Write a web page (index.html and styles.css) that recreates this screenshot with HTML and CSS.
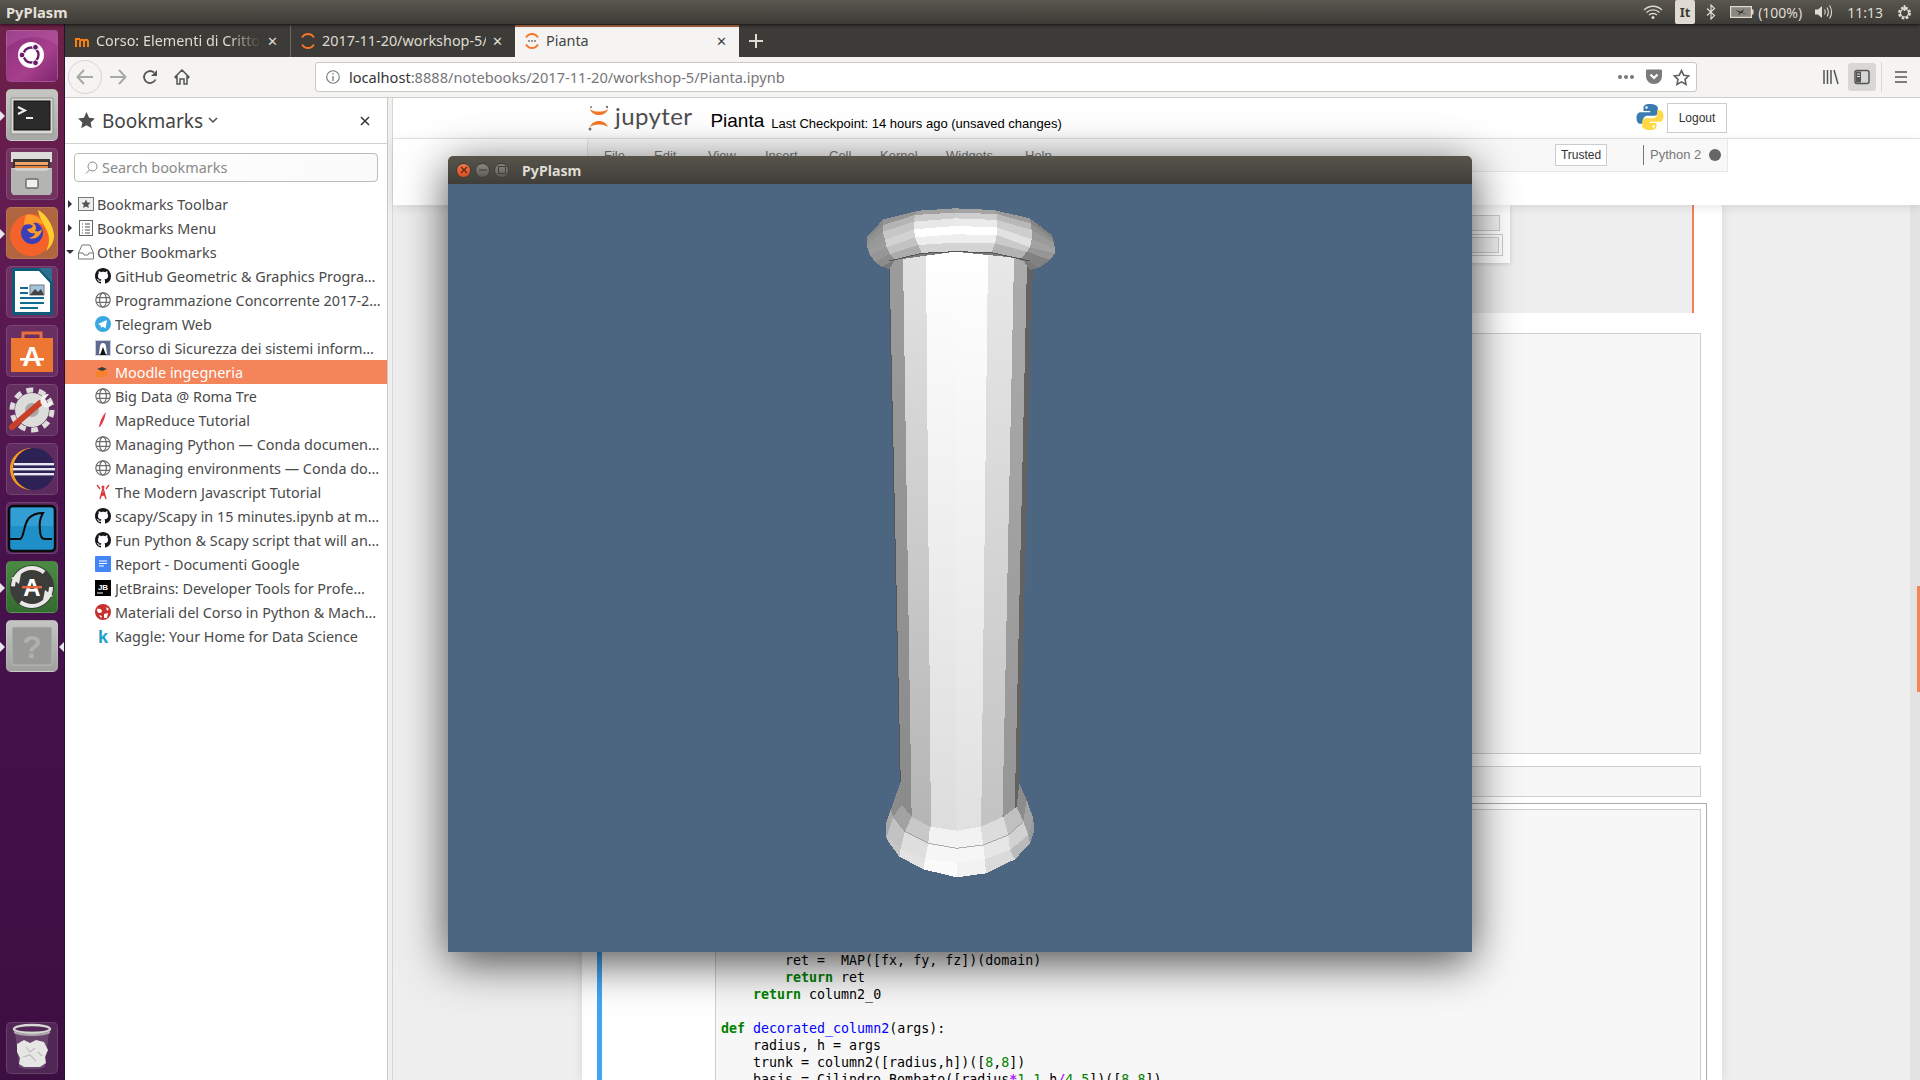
FILE: index.html
```html
<!DOCTYPE html>
<html lang="en">
<head>
  <meta charset="UTF-8" />
  <title>PyPlasm</title>
  <link rel="stylesheet" href="styles.css">
</head>
<body>
  <svg class="defs" width="0" height="0">
    <symbol id="gh" viewBox="0 0 16 16"><path fill="#16171a" d="M8 0C3.58 0 0 3.58 0 8c0 3.54 2.29 6.53 5.47 7.59.4.07.55-.17.55-.38 0-.19-.01-.82-.01-1.49-2.01.37-2.53-.49-2.69-.94-.09-.23-.48-.94-.82-1.13-.28-.15-.68-.52-.01-.53.63-.01 1.08.58 1.23.82.72 1.21 1.87.87 2.33.66.07-.52.28-.87.51-1.07-1.78-.2-3.64-.89-3.64-3.95 0-.87.31-1.59.82-2.15-.08-.2-.36-1.02.08-2.12 0 0 .67-.21 2.2.82.64-.18 1.32-.27 2-.27.68 0 1.36.09 2 .27 1.53-1.04 2.2-.82 2.2-.82.44 1.1.16 1.92.08 2.12.51.56.82 1.27.82 2.15 0 3.07-1.87 3.75-3.65 3.95.29.25.54.73.54 1.48 0 1.07-.01 1.93-.01 2.2 0 .21.15.46.55.38A8.013 8.013 0 0016 8c0-4.42-3.58-8-8-8z"/></symbol>
    <symbol id="globe" viewBox="0 0 16 16"><g fill="none" stroke="#6d6d6d" stroke-width="1.2"><circle cx="8" cy="8" r="7.2"/><ellipse cx="8" cy="8" rx="3.4" ry="7.2"/><path d="M1 5.6h14M1 10.4h14"/></g></symbol>
    <symbol id="jup" viewBox="0 0 24 24"><path fill="#f37726" d="M12 5.500c-4 0-7.400-1-9-2.600C4 6.500 7.600 9 12 9s8-2.500 9-6.100C19.400 4.500 16 5.500 12 5.500zM12 18.500c4 0 7.400 1 9 2.600-1-3.600-4.600-6.100-9-6.100s-8 2.500-9 6.100c1.600-1.600 5-2.600 9-2.600z"/></symbol>
    <linearGradient id="s0" x1="0" y1="0" x2="0" y2="1"><stop offset="0" stop-color="#9c9c9c"/><stop offset="1" stop-color="#8a8a8a"/></linearGradient>
    <linearGradient id="s1" x1="0" y1="0" x2="0" y2="1"><stop offset="0" stop-color="#e2e2e2"/><stop offset="1" stop-color="#b4b4b4"/></linearGradient>
    <linearGradient id="s2" x1="0" y1="0" x2="0" y2="1"><stop offset="0" stop-color="#ffffff"/><stop offset="1" stop-color="#dcdcdc"/></linearGradient>
    <linearGradient id="s3" x1="0" y1="0" x2="0" y2="1"><stop offset="0" stop-color="#ffffff"/><stop offset="1" stop-color="#e0e0e0"/></linearGradient>
    <linearGradient id="s4" x1="0" y1="0" x2="0" y2="1"><stop offset="0" stop-color="#e8e8e8"/><stop offset="1" stop-color="#c2c2c2"/></linearGradient>
    <linearGradient id="s5" x1="0" y1="0" x2="0" y2="1"><stop offset="0" stop-color="#ababab"/><stop offset="1" stop-color="#959595"/></linearGradient>
  </svg>

  <header class="panel">
    <span class="panel-title">PyPlasm</span>
    <div class="indicators">
      <svg class="ind-wifi" width="20" height="16" viewBox="0 0 20 16"><g fill="none" stroke="#dfdbd2" stroke-width="1.3"><path d="M1 6c5-5 13-5 18 0"/><path d="M3.500 8.500c3.500-3.500 9.500-3.500 13 0"/><path d="M6 11c2-2 6-2 8 0"/></g><circle cx="10" cy="13.500" r="1.500" fill="#dfdbd2"/></svg>
      <span class="ind-lang">It</span>
      <svg class="ind-bt" width="10" height="16" viewBox="0 0 10 16"><path fill="none" stroke="#dfdbd2" stroke-width="1.200" d="M1 4.500l7.500 7-3.500 3.500V1l3.500 3.500L1 11.500"/></svg>
      <svg class="ind-batt" width="24" height="14" viewBox="0 0 24 14"><rect x=".6" y="1.600" width="20.800" height="10.800" fill="#8a8881" stroke="#dfdbd2" stroke-width="1.200"/><rect x="21.500" y="4.500" width="2" height="5" fill="#dfdbd2"/><path fill="#33322e" d="M5 5l6 1.500L14 4l-1.500 3.500L17 9l-6-1-3 2.500L9.500 7.500z"/></svg>
      <span class="ind-pct">(100%)</span>
      <svg class="ind-vol" width="20" height="16" viewBox="0 0 20 16"><path fill="#dfdbd2" d="M1 5.500h3L8 2v12l-4-3.500H1z"/><g fill="none" stroke="#dfdbd2" stroke-width="1.100"><path d="M10.500 5.500c1 1.500 1 3.500 0 5"/><path d="M13 3.500c1.800 2.500 1.800 6.500 0 9"/><path d="M15.500 1.500c2.700 3.500 2.700 9.500 0 13"/></g></svg>
      <span class="ind-time">11:13</span>
      <svg class="ind-gear" width="17" height="17" viewBox="0 0 17 17"><circle cx="8.500" cy="9" r="5.300" fill="none" stroke="#dfdbd2" stroke-width="2.400" stroke-dasharray="2.600 1.560"/><circle cx="8.500" cy="9" r="4" fill="none" stroke="#dfdbd2" stroke-width="1.200"/><path d="M8.500 1v6" stroke="#dfdbd2" stroke-width="1.600"/></svg>
    </div>
  </header>

  <div class="desktop">
    <nav class="launcher">
      <div class="tile tile-dash"><svg width="52" height="52" viewBox="0 0 52 52"><path fill="#c468a8" opacity=".35" d="M0 18C16 4 38 4 52 16V0H0z"/><circle cx="25" cy="25" r="13" fill="#fff"/><circle cx="25" cy="25" r="7.500" fill="none" stroke="#6a1b6a" stroke-width="2.400"/><g fill="#6a1b6a" stroke="#fff"><circle cx="16" cy="25" r="2.900"/><circle cx="29.500" cy="17.200" r="2.900"/><circle cx="29.500" cy="32.800" r="2.900"/></g></svg></div>
      <div class="tile tile-term running"><svg width="52" height="52" viewBox="0 0 52 52"><rect x="5" y="9" width="42" height="36" rx="1" fill="#d9d9d6" stroke="#8c8c8a"/><rect x="8" y="12" width="36" height="29" fill="#2b2b2b" stroke="#111"/><path d="M12 18l7 3.500-7 3.500" fill="none" stroke="#eee" stroke-width="2"/><path d="M20 29h7" stroke="#eee" stroke-width="2"/></svg></div>
      <div class="tile tile-glass"><svg width="52" height="52" viewBox="0 0 52 52"><rect x="5" y="4" width="41" height="10" fill="#dcdcda"/><rect x="7" y="11" width="37" height="15" fill="#3a3733"/><rect x="9" y="14" width="33" height="3" fill="#f0a568"/><rect x="9" y="18" width="33" height="3" fill="#e8843c"/><path d="M5 20h41v24l-2 3H7l-2-3z" fill="#b4b4b2"/><path d="M5 20l6 3h29l6-3" fill="#cfcfcd"/><rect x="20" y="31" width="12" height="9" rx="1" fill="#f0f0f0" stroke="#6b6b6b" stroke-width="1.400"/></svg></div>
      <div class="tile tile-fox running"><svg width="52" height="52" viewBox="0 0 52 52"><circle cx="25" cy="28" r="21" fill="#f4622a"/><path d="M32 3c9 5 15 15 16 25 0 7-3 12-8 16 4-8 4-15 0-22-3-6-7-12-8-19z" fill="#ffcd2e"/><circle cx="26" cy="26" r="11" fill="#3a3fb8"/><path d="M20 8c9-2 16 4 17 10-4-3-8-3-10-2 3 2 4 5 2 8 3 1 5 0 7-2-1 8-8 11-13 9 4-1 6-3 6-5-4 1-7-1-8-4 3 0 5-1 6-3-2-2-6-2-9-1 0-4 1-7 2-10z" fill="#ff9a2b"/></svg></div>
      <div class="tile tile-glass"><svg width="52" height="52" viewBox="0 0 52 52"><path d="M6 2h29l12 13v34H6z" fill="#0f5a78"/><path d="M9 5h24l11 12v29H9z" fill="#fff"/><path d="M33 2h13v14z" fill="#2c6f8e"/><g fill="#136a93"><rect x="14" y="21" width="8" height="2"/><rect x="14" y="26" width="8" height="2"/><rect x="14" y="31" width="24" height="2"/><rect x="14" y="36" width="24" height="2"/><rect x="14" y="41" width="18" height="2"/></g><rect x="24" y="19" width="14" height="10" fill="#9fc4dc" stroke="#777"/><path d="M24 29l5-6 3 3 3-3 3 6z" fill="#444"/></svg></div>
      <div class="tile tile-glass"><svg width="52" height="52" viewBox="0 0 52 52"><path d="M17 14V8h18v6" fill="none" stroke="#e8703a" stroke-width="3"/><rect x="5" y="13" width="42" height="34" fill="#ee7633"/><text x="26" y="41" class="tile-letter" font-size="27">A</text><rect x="14" y="33" width="24" height="2.600" fill="#fff"/></svg></div>
      <div class="tile tile-glass"><svg width="52" height="52" viewBox="0 0 52 52"><circle cx="26" cy="26" r="17" fill="#dcdcda"/><circle cx="26" cy="26" r="20" fill="none" stroke="#dcdcda" stroke-width="5" stroke-dasharray="7 5.560"/><circle cx="26" cy="26" r="7" fill="#a8a8a6"/><path d="M6 43l28-24" stroke="#c8402a" stroke-width="6" stroke-linecap="round"/><path d="M36 21c-4-5 0-12 7-11l-4 5 2 4 5-2c1 6-6 9-10 4z" fill="#f0f0ee"/></svg></div>
      <div class="tile tile-glass"><svg width="52" height="52" viewBox="0 0 52 52"><path d="M26 5C13 5 4 15 4 26s9 21 22 21c-10-2-17-10-17-21S16 7 26 5z" fill="#f59c1f"/><circle cx="28" cy="26" r="21" fill="#2c2255"/><g fill="#e8e6f2"><rect x="8" y="20" width="40" height="2.400"/><rect x="7" y="25" width="42" height="2.400"/><rect x="8" y="30" width="40" height="2.400"/></g></svg></div>
      <div class="tile tile-glass"><svg width="52" height="52" viewBox="0 0 52 52"><rect x="3" y="4" width="46" height="45" rx="4" fill="#1f8fc8" stroke="#0a0a0a" stroke-width="2.400"/><rect x="5" y="6" width="42" height="18" fill="#46aee0" opacity=".5"/><path d="M4 37h10c4 0 3-14 9-21 4-4 10-5 14-5-3 5-4 11-3 17 0 5 1 9 5 9h7" fill="none" stroke="#0a0a0a" stroke-width="2"/></svg></div>
      <div class="tile tile-upd running"><svg width="52" height="52" viewBox="0 0 52 52"><circle cx="26" cy="26" r="22" fill="#3c3c3a"/><circle cx="26" cy="26" r="19" fill="none" stroke="#e8e8e6" stroke-width="4" stroke-dasharray="42 18"/><path d="M5 17l10-4-2 10zM47 35l-10 4 2-10z" fill="#e8e8e6"/><text x="26" y="35" class="tile-letter" font-size="24">A</text><rect x="16" y="25" width="20" height="2.400" fill="#e8643a"/></svg></div>
      <div class="tile tile-help running both"><svg width="52" height="52" viewBox="0 0 52 52"><rect x="6" y="7" width="40" height="38" rx="2" fill="#999997" stroke="#b8b8b6"/><text x="26" y="38" class="tile-qm" font-size="32">?</text></svg></div>
      <div class="tile tile-glass tile-trash"><svg width="52" height="52" viewBox="0 0 52 52"><path d="M9 9l4 36c5 3 21 3 26 0l4-36" fill="#ffffff" opacity=".14"/><ellipse cx="26" cy="7" rx="18" ry="4" fill="none" stroke="#d6d6d4" stroke-width="2.400"/><path d="M8 8c4 5 32 5 36 0v3c-4 4-32 4-36 0z" fill="#a8a8a6"/><path d="M11 22l7-4 6 3 6-3 8 2 4 8-3 7 1 6-6 4H18l-5-3 1-6-3-6z" fill="#e6e6e4"/><path d="M20 25l4 5 5-4M17 35l7-2 6 6M32 30l4 4" fill="none" stroke="#bdbdbb" stroke-width="1.200"/></svg></div>
    </nav>

    <div class="firefox">
      <div class="tabstrip">
        <div class="tab">
          <svg class="tab-icon" width="16" height="16" viewBox="0 0 16 16"><path d="M6 14V9c0-3 4-3 4 0v5M10 14V9c0-3 4-3 4 0v5M2 14V6h4" fill="none" stroke="#f98012" stroke-width="2"/></svg>
          <span class="tab-label tab-fade">Corso: Elementi di Crittografia</span>
          <span class="tab-close">✕</span>
        </div>
        <div class="tab tab-sep">
          <svg class="tab-icon" width="16" height="16" viewBox="0 0 16 16"><path d="M14 4.500C12.700 2.400 10.500 1 8 1S3.300 2.400 2 4.500M2 11.500C3.300 13.600 5.500 15 8 15s4.700-1.400 6-3.500" fill="none" stroke="#f37726" stroke-width="1.800"/></svg>
          <span class="tab-label">2017-11-20/workshop-5/</span>
          <span class="tab-close">✕</span>
        </div>
        <div class="tab tab-active">
          <svg class="tab-icon" width="16" height="16" viewBox="0 0 16 16"><path d="M14 4.500C12.700 2.400 10.500 1 8 1S3.300 2.400 2 4.500M2 11.500C3.300 13.600 5.500 15 8 15s4.700-1.400 6-3.500" fill="none" stroke="#f37726" stroke-width="1.800"/><circle cx="5" cy="8" r="1" fill="#777"/><circle cx="8" cy="8" r="1" fill="#777"/><circle cx="11" cy="8" r="1" fill="#777"/></svg>
          <span class="tab-label">Pianta</span>
          <span class="tab-close">✕</span>
        </div>
        <svg class="tab-new" width="14" height="14" viewBox="0 0 14 14"><path d="M7 0v14M0 7h14" stroke="#dfdbd2" stroke-width="2"/></svg>
      </div>

      <div class="navbar">
        <div class="nav-back"><svg width="18" height="16" viewBox="0 0 18 16"><path d="M8 1L1.500 8 8 15M2 8h15" fill="none" stroke="#a9a9a7" stroke-width="2"/></svg></div>
        <svg class="nav-fwd" width="18" height="16" viewBox="0 0 18 16"><path d="M10 1l6.500 7L10 15M16 8H1" fill="none" stroke="#a9a9a7" stroke-width="2"/></svg>
        <svg class="nav-reload" width="16" height="16" viewBox="0 0 16 16"><path d="M13.500 10.500A6 6 0 1 1 12 3.500" fill="none" stroke="#555" stroke-width="1.800"/><path d="M15 1v6H9z" fill="#555"/></svg>
        <svg class="nav-home" width="16" height="16" viewBox="0 0 16 16"><path d="M1 8l7-7 7 7-1 1-1-1v7h-3v-5H6v5H3V8L2 9z" fill="none" stroke="#555" stroke-width="1.500"/></svg>
        <div class="urlbar">
          <svg class="url-info" width="14" height="14" viewBox="0 0 14 14"><circle cx="7" cy="7" r="6.300" fill="none" stroke="#777" stroke-width="1.100"/><path d="M7 6v5M7 3v1.600" stroke="#777" stroke-width="1.300"/></svg>
          <span class="url-text"><b>localhost</b>:8888/notebooks/2017-11-20/workshop-5/Pianta.ipynb</span>
          <span class="url-more"><i></i><i></i><i></i></span>
          <svg class="url-pocket" width="16" height="16" viewBox="0 0 16 16"><path d="M0 2c0-1 .6-1.500 1.500-1.500h13C15.400.5 16 1 16 2v5c0 4.500-3.500 8-8 8s-8-3.500-8-8z" fill="#7b7b7b"/><path d="M4.500 5.500L8 9l3.500-3.500" fill="none" stroke="#fff" stroke-width="2.200"/></svg>
          <svg class="url-star" width="17" height="17" viewBox="0 0 17 17"><path d="M8.500 1.500l2.200 4.700 5 .6-3.700 3.500 1 5.100-4.500-2.500L4 15.400l1-5.100L1.300 6.800l5-.6z" fill="none" stroke="#5f5f5f" stroke-width="1.600"/></svg>
        </div>
        <svg class="nav-lib" width="16" height="16" viewBox="0 0 16 16"><path d="M1 1v14M4.500 1v14M8 1v14M11 1l4 14" stroke="#555" stroke-width="1.500" fill="none"/></svg>
        <div class="nav-side"><svg width="16" height="16" viewBox="0 0 16 16"><rect x="1" y="1.500" width="14" height="13" rx="2" fill="none" stroke="#555" stroke-width="1.500"/><rect x="2" y="2.500" width="5" height="11" fill="#555"/><path d="M3 5h3M3 7.500h3" stroke="#ddd"/></svg></div>
        <span class="nav-divider"></span>
        <svg class="nav-menu" width="14" height="14" viewBox="0 0 14 14"><path d="M1 2h12M1 7h12M1 12h12" stroke="#555" stroke-width="1.600"/></svg>
      </div>

      <div class="browser-body">
        <aside class="sidebar">
          <div class="side-head">
            <svg class="side-star" width="19" height="19" viewBox="0 0 17 17"><path d="M8.500 1l2.300 5 5.200.6-3.800 3.600 1 5.300-4.700-2.700-4.700 2.700 1-5.300L1 6.600 6.200 6z" fill="#4f4f4f"/></svg>
            <span class="side-title">Bookmarks</span>
            <svg class="side-chev" width="10" height="7" viewBox="0 0 10 7"><path d="M1 1l4 4 4-4" fill="none" stroke="#4f4f4f" stroke-width="1.500"/></svg>
            <svg class="side-close" width="10" height="10" viewBox="0 0 10 10"><path d="M1 1l8 8M9 1l-8 8" stroke="#333" stroke-width="1.500"/></svg>
          </div>
          <div class="side-search">
            <svg width="13" height="13" viewBox="0 0 13 13"><circle cx="7.500" cy="5.500" r="4.500" fill="none" stroke="#888"/><path d="M4.500 9L1 12.500" stroke="#888"/></svg>
            <span>Search bookmarks</span>
          </div>
          <ul class="bm-list">
            <li class="bm-row bm-folder"><span class="twisty"></span><svg width="16" height="16" viewBox="0 0 16 16"><rect x=".5" y="1.500" width="15" height="13" fill="#eee" stroke="#777"/><path d="M8 3.500l1.400 3 3.100.3-2.300 2.100.7 3.100L8 10.400 5.100 12l.7-3.100-2.300-2.100 3.100-.3z" fill="#555"/></svg><span class="bm-text">Bookmarks Toolbar</span></li>
            <li class="bm-row bm-folder"><span class="twisty"></span><svg width="16" height="16" viewBox="0 0 16 16"><rect x="1.500" y=".5" width="13" height="15" fill="#fff" stroke="#666"/><path d="M4 4h1M4 7h1M4 10h1M4 13h1M7 4h5M7 7h5M7 10h5M7 13h5" stroke="#555"/></svg><span class="bm-text">Bookmarks Menu</span></li>
            <li class="bm-row bm-folder"><span class="twisty twisty-open"></span><svg width="16" height="16" viewBox="0 0 16 16"><path d="M4 1h8l3.500 8v6H.5V9zM.5 9H5l1 2h4l1-2h4.500" fill="#fff" stroke="#777"/></svg><span class="bm-text">Other Bookmarks</span></li>
            <li class="bm-row"><svg class="fav"><use href="#gh"/></svg><span class="bm-text">GitHub Geometric &amp; Graphics Progra…</span></li>
            <li class="bm-row"><svg class="fav"><use href="#globe"/></svg><span class="bm-text">Programmazione Concorrente 2017-2…</span></li>
            <li class="bm-row"><svg class="fav" viewBox="0 0 16 16"><circle cx="8" cy="8" r="8" fill="#37a8e0"/><path d="M3 8l9-4-1.500 8.500-3-2-1.500 1.500-.3-2.500z" fill="#fff"/></svg><span class="bm-text">Telegram Web</span></li>
            <li class="bm-row"><svg class="fav" viewBox="0 0 16 16"><rect width="16" height="16" fill="#c9cfe0"/><rect x="1" y="1" width="14" height="14" fill="#5d6a92"/><path d="M8 3c-3 0-3 3-4 11h8C11 6 11 3 8 3z" fill="#fff"/><path d="M8 7L5 15h6z" fill="#111"/></svg><span class="bm-text">Corso di Sicurezza dei sistemi inform…</span></li>
            <li class="bm-row bm-active"><svg class="fav" viewBox="0 0 16 16"><path d="M2 5l5-2 5 2-5 2z" fill="#3a3a3a"/><path d="M5 13V9c0-2 3-2 3 0v4M8 13V9c0-2 3-2 3 0v4M2 13V8h3" fill="none" stroke="#f98012" stroke-width="1.600"/></svg><span class="bm-text">Moodle ingegneria</span></li>
            <li class="bm-row"><svg class="fav"><use href="#globe"/></svg><span class="bm-text">Big Data @ Roma Tre</span></li>
            <li class="bm-row"><svg class="fav" viewBox="0 0 16 16"><path d="M11 0C8 3 6 7 4 14l1 1c3-4 5-9 6-15z" fill="#e23a4b"/><path d="M3 14l1 2" stroke="#ddd"/></svg><span class="bm-text">MapReduce Tutorial</span></li>
            <li class="bm-row"><svg class="fav"><use href="#globe"/></svg><span class="bm-text">Managing Python — Conda documen…</span></li>
            <li class="bm-row"><svg class="fav"><use href="#globe"/></svg><span class="bm-text">Managing environments — Conda do…</span></li>
            <li class="bm-row"><svg class="fav" viewBox="0 0 16 16"><g fill="none" stroke="#d93a3a" stroke-width="1.300"><path d="M8 4l-3 11M8 4l3 11M6 9h4M5 13l5-4M11 13L6 9"/><path d="M2 1l3 4M14 1l-3 4"/></g><circle cx="8" cy="3" r="1.500" fill="#d93a3a"/></svg><span class="bm-text">The Modern Javascript Tutorial</span></li>
            <li class="bm-row"><svg class="fav"><use href="#gh"/></svg><span class="bm-text">scapy/Scapy in 15 minutes.ipynb at m…</span></li>
            <li class="bm-row"><svg class="fav"><use href="#gh"/></svg><span class="bm-text">Fun Python &amp; Scapy script that will an…</span></li>
            <li class="bm-row"><svg class="fav" viewBox="0 0 16 16"><rect width="16" height="16" rx="1" fill="#4285f4"/><path d="M4 5h8M4 7.500h8M4 10h5" stroke="#fff"/></svg><span class="bm-text">Report - Documenti Google</span></li>
            <li class="bm-row"><svg class="fav" viewBox="0 0 16 16"><rect width="16" height="16" fill="#000"/><text x="8" y="9.500" class="fav-jb">JB</text><rect x="2" y="12.500" width="6" height="1" fill="#fff"/></svg><span class="bm-text">JetBrains: Developer Tools for Profe…</span></li>
            <li class="bm-row"><svg class="fav" viewBox="0 0 16 16"><circle cx="8" cy="8" r="8" fill="#c8302e"/><path d="M2 5c3-1 5 0 5 3-3 2-5 1-5-3zM11 3l3 2-2 2zM9 10l4-1-1 5-3 0zM4 11l3 1-1 2z" fill="#fff"/></svg><span class="bm-text">Materiali del Corso in Python &amp; Mach…</span></li>
            <li class="bm-row"><svg class="fav" viewBox="0 0 16 16"><text x="8" y="14.500" class="fav-k">k</text></svg><span class="bm-text">Kaggle: Your Home for Data Science</span></li>
          </ul>
        </aside>
        <div class="splitter"></div>

        <main class="content">
          <div class="nb-header">
            <svg class="jup-logo" width="24" height="28" viewBox="0 0 24 28"><use href="#jup" y="2" width="24" height="24"/><circle cx="3" cy="25" r="1.500" fill="#777"/><circle cx="20" cy="3" r="1.200" fill="#777"/><circle cx="4" cy="3" r="1" fill="#777"/></svg>
            <span class="jup-name">jupyter</span>
            <span class="nb-name">Pianta</span>
            <span class="nb-check">Last Checkpoint: 14 hours ago (unsaved changes)</span>
            <svg class="py-logo" width="28" height="28" viewBox="0 0 28 28"><path fill="#3b7cb0" d="M13.800 1C8.500 1 7.500 3 7.500 5v3h6.700v1.200H4.500C2 9.200 0.500 11.500 0.500 15s1.500 5.800 4 5.800h2.300v-3.200c0-2.700 2.300-4.800 5-4.800h6.500c2 0 3.500-1.600 3.500-3.500V5c0-2.200-2.500-4-8.500-4z"/><path fill="#ffd845" d="M14.200 27c5.300 0 6.300-2 6.300-4v-3h-6.700v-1.200h9.700c2.500 0 4-2.300 4-5.800s-1.500-5.800-4-5.800h-2.300v3.200c0 2.700-2.300 4.800-5 4.800H9.700c-2 0-3.500 1.600-3.500 3.500V23c0 2.200 2.500 4 8 4z"/><circle cx="10.500" cy="4.500" r="1.200" fill="#fff"/><circle cx="17.500" cy="23.500" r="1.200" fill="#fff"/></svg>
            <span class="btn-logout">Logout</span>
          </div>
          <div class="nb-menuwrap">
            <div class="nb-menubar">
              <span class="menu-item menu-file">File</span>
              <span class="menu-item menu-edit">Edit</span>
              <span class="menu-item menu-view">View</span>
              <span class="menu-item menu-insert">Insert</span>
              <span class="menu-item menu-cell">Cell</span>
              <span class="menu-item menu-kernel">Kernel</span>
              <span class="menu-item menu-widgets">Widgets</span>
              <span class="menu-item">Help</span>
              <span class="btn-trusted">Trusted</span>
              <span class="kernel-name">Python 2</span>
              <span class="kernel-dot"></span>
            </div>
          </div>
          <div class="nb-site">
            <div class="gutter-left"></div>
            <div class="notebook">
              <div class="out-cell">
                <div class="widget">
                  <div class="widget-field"></div>
                  <div class="widget-frame"><div class="widget-field"></div></div>
                </div>
              </div>
              <div class="cell cell-tall"></div>
              <div class="cell cell-short"></div>
              <div class="cell-selected">
                <div class="prompt"></div>
<pre class="code">        ret =  MAP([fx, fy, fz])(domain)
        <span class="kw">return</span> ret
    <span class="kw">return</span> column2_0

<span class="kw">def</span> <span class="fn">decorated_column2</span>(args):
    radius, h = args
    trunk = column2([radius,h])([<span class="num">8</span>,<span class="num">8</span>])
    basis = Cilindro_Bombato([radius<span class="op">*</span><span class="num">1.1</span>,h<span class="op">/</span><span class="num">4.5</span>])([<span class="num">8</span>,<span class="num">8</span>])</pre>
              </div>
            </div>
            <div class="gutter-right"></div>
            <div class="scrollbar"><div class="scroll-thumb"></div></div>
          </div>
        </main>
      </div>
    </div>
  </div>

  <section class="window">
    <div class="win-title">
      <span class="win-btn win-close"><svg width="8" height="8" viewBox="0 0 8 8"><path d="M1 1l6 6M7 1L1 7" stroke="#5a2410" stroke-width="1.100"/></svg></span>
      <span class="win-btn"><svg width="8" height="8" viewBox="0 0 8 8"><path d="M0 4h8" stroke="#3c3b37" stroke-width="1.100"/></svg></span>
      <span class="win-btn"><svg width="8" height="8" viewBox="0 0 8 8"><rect x=".5" y=".5" width="7" height="7" fill="none" stroke="#3c3b37"/></svg></span>
      <span class="win-name">PyPlasm</span>
    </div>
    <div class="win-view">
      <svg class="model" width="1024" height="768" viewBox="448 184 1024 768">
        <!-- shaft -->
        <g shape-rendering="crispEdges">
          <polygon fill="url(#s0)" points="889,262 903,258 912,840 901,840"/>
          <polygon fill="url(#s1)" points="903,258 926,253 931,840 912,840"/>
          <polygon fill="url(#s2)" points="926,253 956,251 956,840 931,840"/>
          <polygon fill="url(#s3)" points="956,251 988,253 981,840 956,840"/>
          <polygon fill="url(#s4)" points="988,253 1014,258 1002,840 981,840"/>
          <polygon fill="url(#s5)" points="1014,258 1027,262 1014,840 1002,840"/>
          <polygon fill="#626262" points="1027,262 1033,262 1018,840 1014,840"/>
          <path d="M889 262L901 815" stroke="#555" stroke-width="1" fill="none"/>
        </g>
        <!-- capital, coordinates as zoomed 3x from 840,190 -->
        <g transform="translate(840 190) scale(.3333)" shape-rendering="crispEdges">
          <polygon fill="#7a7a7a" points="82,140 130,88 235,62 345,55 460,60 570,85 635,135 645,175 640,192 600,232 570,240 545,205 345,185 165,210 148,238 115,225 88,190 80,160"/>
          <polygon fill="#8a8a8a" points="82,140 130,88 130,105 80,150"/><polygon fill="#949494" points="130,88 235,62 225,75 130,105"/><polygon fill="#a0a0a0" points="235,62 345,55 345,68 225,75"/><polygon fill="#a4a4a4" points="345,55 460,60 470,72 345,68"/><polygon fill="#9a9a9a" points="460,60 570,85 572,100 470,72"/><polygon fill="#848484" points="570,85 635,135 640,148 572,100"/>
          <polygon fill="#929292" points="80,150 130,105 128,125 80,165"/><polygon fill="#b4b4b4" points="130,105 225,75 222,95 128,125"/><polygon fill="#cccccc" points="225,75 345,68 345,85 222,95"/><polygon fill="#cecece" points="345,68 470,72 472,90 345,85"/><polygon fill="#b8b8b8" points="470,72 572,100 575,120 472,90"/><polygon fill="#909090" points="572,100 640,148 642,160 575,120"/>
          <polygon fill="#989898" points="80,165 128,125 135,150 85,180"/><polygon fill="#c6c6c6" points="128,125 222,95 222,118 135,150"/><polygon fill="#e8e8e8" points="222,95 345,85 345,108 222,118"/><polygon fill="#ebebeb" points="345,85 472,90 470,112 345,108"/><polygon fill="#cecece" points="472,90 575,120 575,148 470,112"/><polygon fill="#9a9a9a" points="575,120 642,160 645,175 575,148"/>
          <polygon fill="#9c9c9c" points="85,180 135,150 140,172 90,195"/><polygon fill="#d2d2d2" points="135,150 222,118 225,142 140,172"/><polygon fill="#ffffff" points="222,118 345,108 345,133 225,142"/><polygon fill="#ffffff" points="345,108 470,112 470,135 345,133"/><polygon fill="#e2e2e2" points="470,112 575,148 570,172 470,135"/><polygon fill="#a2a2a2" points="575,148 645,175 645,190 570,172"/>
          <polygon fill="#969696" points="90,195 140,172 150,192 105,215"/><polygon fill="#c2c2c2" points="140,172 225,142 235,165 150,192"/><polygon fill="#eeeeee" points="225,142 345,133 345,158 235,165"/><polygon fill="#eeeeee" points="345,133 470,135 465,160 345,158"/><polygon fill="#cacaca" points="470,135 570,172 560,185 465,160"/><polygon fill="#969696" points="570,172 645,190 630,210 560,185"/>
          <polygon fill="#8c8c8c" points="105,215 150,192 165,210 125,230"/><polygon fill="#acacac" points="150,192 235,165 245,190 165,210"/><polygon fill="#d4d4d4" points="235,165 345,158 345,185 245,190"/><polygon fill="#d4d4d4" points="345,158 465,160 455,188 345,185"/><polygon fill="#b2b2b2" points="465,160 560,185 545,205 455,188"/><polygon fill="#828282" points="560,185 630,210 600,232 545,205"/>
          <polyline fill="none" stroke="#565656" stroke-width="3" points="148,213 245,190 345,185 455,188 570,213"/>
        </g>
        <!-- base, coordinates as zoomed 3x from 860,760 -->
        <g transform="translate(860 760) scale(.3333)" shape-rendering="crispEdges">
          <polygon fill="#8c8c8c" points="122,65 125,135 100,170 92,150"/><polygon fill="#a2a2a2" points="125,135 155,170 135,215 100,170"/><polygon fill="#c8c8c8" points="155,170 210,200 205,250 135,215"/><polygon fill="#f2f2f2" points="210,200 290,212 290,265 205,250"/><polygon fill="#f2f2f2" points="290,212 362,200 370,255 290,265"/><polygon fill="#dcdcdc" points="362,200 430,170 445,225 370,255"/><polygon fill="#c0c0c0" points="430,170 470,140 490,185 445,225"/><polygon fill="#8c8c8c" points="470,140 478,70 500,120 490,185"/>
          <polygon fill="#a8a8a8" points="92,150 100,170 80,230 78,190"/><polygon fill="#c2c2c2" points="100,170 135,215 122,265 80,230"/><polygon fill="#dedede" points="135,215 205,250 195,298 122,265"/><polygon fill="#f6f6f6" points="205,250 290,265 290,308 195,298"/><polygon fill="#f6f6f6" points="290,265 370,255 375,298 290,308"/><polygon fill="#e6e6e6" points="370,255 445,225 450,270 375,298"/><polygon fill="#d2d2d2" points="445,225 490,185 505,225 450,270"/><polygon fill="#a2a2a2" points="490,185 500,120 520,175 505,225"/>
          <polygon fill="#b0b0b0" points="78,190 80,230 90,252 78,232"/><polygon fill="#c6c6c6" points="80,230 122,265 118,290 90,252"/><polygon fill="#e2e2e2" points="122,265 195,298 190,328 118,290"/><polygon fill="#fbfbfb" points="195,298 290,308 290,352 190,328"/><polygon fill="#f2f2f2" points="290,308 375,298 378,340 290,352"/><polygon fill="#dadada" points="375,298 450,270 465,298 378,340"/><polygon fill="#bababa" points="450,270 505,225 510,250 465,298"/><polygon fill="#9a9a9a" points="505,225 520,175 522,215 510,250"/>
          <polyline fill="none" stroke="#888" stroke-width="2" points="100,170 135,215 205,250 290,265 370,255 445,225 490,185"/>
        </g>
      </svg>
    </div>
  </section>
</body>
</html>
```

FILE: styles.css
```css
* {
  box-sizing: border-box;
}
html, body {
  margin: 0;
  height: 100%;
  overflow: hidden;
}
body {
  display: flex;
  flex-direction: column;
  font-family: 'Noto Sans', sans-serif;
  font-size: 14.4px;
  color: #333;
  background: #3c3b37;
  position: relative;
}
.defs {
  position: absolute;
}

/* unity panel */
.panel {
  height: 24px;
  flex: none;
  display: flex;
  align-items: center;
  padding-left: 6px;
  background: linear-gradient(#5a574d, #3c3b37);
  color: #dfdbd2;
  box-shadow: 0 1px 3px rgba(0,0,0,0.7);
  position: relative;
  z-index: 2;
}
.panel-title {
  font-weight: 700;
  font-size: 14.7px;
  color: #e4e0d8;
}
.indicators {
  margin-left: auto;
  display: flex;
  align-items: center;
  height: 24px;
  padding-right: 7px;
}
.ind-wifi { margin-right: 12px; }
.ind-lang {
  width: 20px;
  height: 24px;
  background: #dfdbd2;
  color: #3c3b37;
  font-weight: 700;
  font-size: 13px;
  text-align: center;
  line-height: 24px;
  border-radius: 2px;
  margin-right: 11px;
}
.ind-bt { margin-right: 14px; }
.ind-batt { margin-right: 4px; }
.ind-pct { font-size: 14px; margin-right: 12px; }
.ind-vol { margin-right: 13px; }
.ind-time { font-size: 14px; margin-right: 13px; }

/* launcher */
.desktop {
  flex: 1;
  display: flex;
  min-height: 0;
}
.launcher {
  width: 65px;
  flex: none;
  display: flex;
  flex-direction: column;
  gap: 7px;
  padding: 6px 0 6px 6px;
  background: linear-gradient(#6e2148 0, #5e1a52 22%, #47124c 50%, #3d0e42 100%);
  border-right: 1px solid #2a1030;
}
.tile {
  width: 52px;
  height: 52px;
  flex: none;
  border-radius: 5px;
  position: relative;
  border: 1px solid rgba(255,255,255,0.12);
}
.tile svg {
  position: absolute;
  left: -1px;
  top: -1px;
}
.tile-dash { background: linear-gradient(135deg, #8a2f80, #a83f8c 60%, #7c2670); }
.tile-term { background: linear-gradient(#c6c6c2, #a8a8a4); }
.tile-glass { background: rgba(255,255,255,0.1); }
.tile-fox { background: #b0643f; }
.tile-upd { background: linear-gradient(#4c8a44, #356b30); }
.tile-help { background: linear-gradient(#c4c4c2, #a0a09e); }
.tile-trash { margin-top: auto; }
.tile-letter {
  font-family: 'Liberation Sans', sans-serif;
  font-weight: 700;
  fill: #fff;
  text-anchor: middle;
}
.tile-qm {
  font-family: 'Liberation Sans', sans-serif;
  font-weight: 700;
  fill: #b0b0ae;
  text-anchor: middle;
}
.running::before {
  content: "";
  position: absolute;
  left: -7px;
  top: 21px;
  border: 5px solid transparent;
  border-left-color: #e8e6e8;
  border-right-width: 0;
}
.both::after {
  content: "";
  position: absolute;
  right: -7px;
  top: 21px;
  border: 5px solid transparent;
  border-right-color: #e8e6e8;
  border-left-width: 0;
}

/* firefox */
.firefox {
  flex: 1;
  min-width: 0;
  display: flex;
  flex-direction: column;
}
.tabstrip {
  height: 33px;
  flex: none;
  display: flex;
  align-items: flex-end;
  background: #3c3b37;
  color: #dfdbd2;
  font-size: 14.4px;
}
.tab {
  width: 225px;
  height: 32px;
  display: flex;
  align-items: center;
  padding: 0 12px 1px 9px;
  flex: none;
}
.tab-sep {
  border-left: 1px solid #6a6963;
}
.tab-icon {
  flex: none;
  margin-right: 6px;
}
.tab-label {
  flex: 1;
  white-space: nowrap;
  overflow: hidden;
  min-width: 0;
}
.tab-fade {
  -webkit-mask-image: linear-gradient(to right, #000 80%, transparent 100%);
  mask-image: linear-gradient(to right, #000 80%, transparent 100%);
}
.tab-close {
  flex: none;
  font-size: 13px;
  margin-left: 6px;
}
.tab-active {
  background: #f5f4f2;
  color: #444;
  border-top: 2px solid #b86a45;
  width: 224px;
  padding-bottom: 3px;
}
.tab-new {
  margin: 0 0 9px 10px;
}

.navbar {
  height: 41px;
  flex: none;
  display: flex;
  align-items: center;
  background: #f5f4f2;
  border-bottom: 1px solid #cfcdca;
  padding-left: 3px;
}
.nav-back {
  width: 34px;
  height: 34px;
  border-radius: 50%;
  border: 1px solid #d5d4d2;
  display: flex;
  align-items: center;
  justify-content: center;
  flex: none;
}
.nav-fwd { margin-left: 7px; }
.nav-reload { margin-left: 15px; }
.nav-home { margin-left: 16px; }
.urlbar {
  width: 1382px;
  height: 30px;
  margin-left: 125px;
  flex: none;
  display: flex;
  align-items: center;
  background: #fff;
  border: 1px solid #cac8c5;
  border-radius: 3px;
  padding-left: 10px;
  padding-right: 6px;
}
.url-text {
  margin-left: 9px;
  color: #77777a;
  font-size: 14.6px;
  white-space: nowrap;
}
.url-text b {
  font-weight: 400;
  color: #333;
}
.url-more {
  margin-left: auto;
  display: flex;
  gap: 2px;
}
.url-more i {
  width: 4px;
  height: 4px;
  border-radius: 50%;
  background: #777;
}
.url-pocket { margin-left: 12px; }
.url-star { margin-left: 11px; }
.nav-lib { margin-left: 126px; }
.nav-side {
  width: 28px;
  height: 28px;
  margin-left: 9px;
  background: #d8d7d5;
  border-radius: 3px;
  display: flex;
  align-items: center;
  justify-content: center;
  flex: none;
}
.nav-divider {
  width: 1px;
  height: 30px;
  background: #d8d7d5;
  margin-left: 5px;
}
.nav-menu { margin-left: 12px; }

.browser-body {
  flex: 1;
  display: flex;
  min-height: 0;
}

/* sidebar */
.sidebar {
  width: 322px;
  flex: none;
  background: #fff;
  display: flex;
  flex-direction: column;
}
.side-head {
  height: 46px;
  flex: none;
  display: flex;
  align-items: center;
  padding-left: 12px;
  border-bottom: 1px solid #d4d2cf;
}
.side-title {
  font-size: 19px;
  margin-left: 6px;
  color: #444;
}
.side-chev { margin-left: 5px; }
.side-close { margin-left: auto; margin-right: 17px; }
.side-search {
  margin: 9px 9px 10px 9px;
  height: 29px;
  flex: none;
  display: flex;
  align-items: center;
  gap: 4px;
  padding-left: 10px;
  border: 1px solid #bdbbb8;
  border-radius: 4px;
  color: #8a8a8a;
  background: linear-gradient(to right, #fff, #fafafa);
}
.bm-list {
  list-style: none;
  margin: 0;
  padding: 0;
}
.bm-row {
  height: 24px;
  display: flex;
  align-items: center;
  padding-left: 30px;
  white-space: nowrap;
}
.bm-row > svg {
  flex: none;
  margin-right: 4px;
}
.fav {
  width: 16px;
  height: 16px;
}
.bm-folder {
  padding-left: 3px;
}
.bm-folder > svg {
  margin-right: 3px;
}
.twisty {
  width: 4px;
  height: 8px;
  flex: none;
  margin-right: 6px;
  border-top: 4px solid transparent;
  border-bottom: 4px solid transparent;
  border-left: 4px solid #333;
}
.twisty-open {
  width: 8px;
  height: 4px;
  margin: 0 4px 0 -2px;
  border-left: 4px solid transparent;
  border-right: 4px solid transparent;
  border-top: 4px solid #333;
  border-bottom: 0;
}
.bm-text {
  color: #4a4a4a;
  overflow: hidden;
}
.bm-active {
  background: #f4845a;
}
.bm-active .bm-text {
  color: #fff;
}
.fav-jb {
  font-family: 'Liberation Sans', sans-serif;
  font-weight: 700;
  font-size: 8px;
  fill: #fff;
  text-anchor: middle;
}
.fav-k {
  font-family: 'Liberation Sans', sans-serif;
  font-weight: 700;
  font-size: 18px;
  fill: #20a0c8;
  text-anchor: middle;
}
.splitter {
  width: 6px;
  flex: none;
  background: #f1f0ee;
  border-left: 1px solid #ccc9c5;
  border-right: 1px solid #d8d6d3;
}

/* jupyter page */
.content {
  flex: 1;
  min-width: 0;
  display: flex;
  flex-direction: column;
  background: #fff;
  font-family: 'Liberation Sans', sans-serif;
}
.nb-header {
  height: 41px;
  flex: none;
  display: flex;
  align-items: center;
  padding-left: 194px;
  border-bottom: 1px solid #e7e7e7;
}
.jup-name {
  font-family: 'Lato', sans-serif;
  font-size: 24px;
  color: #4e4e4e;
  margin-left: 4px;
  letter-spacing: 0.4px;
  position: relative;
  top: -3px;
}
.nb-name {
  font-size: 19px;
  color: #000;
  margin-left: 18px;
  position: relative;
  top: 3px;
}
.nb-check {
  font-size: 13px;
  color: #000;
  margin-left: 7px;
  position: relative;
  top: 5px;
}
.py-logo { margin-left: auto; margin-top: -2px; }
.btn-logout {
  width: 60px;
  height: 30px;
  margin: 0 193px 0 3px;
  border: 1px solid #ccc;
  font-size: 12px;
  color: #333;
  display: flex;
  align-items: center;
  justify-content: center;
}
.nb-menuwrap {
  height: 66px;
  flex: none;
  padding-left: 194px;
  background: #fff;
  position: relative;
  z-index: 1;
  box-shadow: 0 2px 10px rgba(0,0,0,0.1);
}
.nb-menubar {
  width: 1141px;
  height: 33px;
  display: flex;
  align-items: center;
  background: #f8f8f8;
  border: 1px solid #e7e7e7;
  border-top: 0;
  font-size: 13px;
  color: #777;
  padding-left: 16px;
  white-space: nowrap;
}
.menu-item { width: 50px; flex: none; }
.menu-edit { width: 54px; }
.menu-view { width: 57px; }
.menu-insert { width: 64px; }
.menu-cell { width: 51px; }
.menu-kernel { width: 66px; }
.menu-widgets { width: 79px; }
.btn-trusted {
  width: 52px;
  height: 22px;
  margin-left: 480px;
  flex: none;
  border: 1px solid #ccc;
  background: #fff;
  font-size: 12px;
  color: #333;
  text-align: center;
  line-height: 20px;
}
.kernel-name {
  margin-left: 36px;
  flex: none;
  border-left: 1px solid #777;
  padding-left: 6px;
  font-size: 13px;
  line-height: 20px;
}
.kernel-dot {
  width: 12px;
  height: 12px;
  flex: none;
  border-radius: 50%;
  background: #666;
  margin-left: 8px;
}
.nb-site {
  flex: 1;
  min-height: 0;
  display: flex;
  background: #eee;
}
.gutter-left {
  width: 189px;
  flex: none;
}
.notebook {
  width: 1140px;
  flex: none;
  background: #fff;
  display: flex;
  flex-direction: column;
  overflow: hidden;
  box-shadow: 0 0 10px rgba(0,0,0,0.1);
}
.gutter-right {
  flex: 1;
}
.scrollbar {
  width: 10px;
  flex: none;
  background: #e3e3e3;
  padding: 381px 0 0 7px;
}
.scroll-thumb {
  width: 3px;
  height: 106px;
  background: #f4845a;
}
.out-cell {
  height: 108px;
  flex: none;
  margin: 0 28px 0 133px;
  background: #eee;
  border-right: 2px solid #f0805a;
}
.widget {
  width: 795px;
  height: 58px;
  background: #fff;
  box-shadow: 0 1px 4px rgba(0,0,0,0.15);
  padding: 10px 10px 0 0;
}
.widget-field {
  height: 16px;
  background: #f2f2f2;
  border: 1px solid #ccc;
  margin-left: 40px;
}
.widget-frame {
  margin-top: 3px;
  margin-right: -3px;
  padding: 2px 3px 2px 0;
  border: 1px solid #ccc;
  margin-left: 30px;
}
.cell {
  flex: none;
  margin: 0 21px 0 133px;
  background: #f7f7f7;
  border: 1px solid #cfcfcf;
}
.cell-tall {
  height: 421px;
  margin-top: 20px;
}
.cell-short {
  height: 31px;
  margin-top: 12px;
}
.cell-selected {
  height: 320px;
  flex: none;
  display: flex;
  margin: 6px 15px 0 15px;
  padding: 5px 5px 0 0;
  border: 1px solid #ababab;
  border-left: 5px solid #42a5f5;
}
.prompt {
  width: 113px;
  flex: none;
}
.code {
  flex: 1;
  margin: 0;
  padding: 142px 5px 0 5px;
  background: #f7f7f7;
  border: 1px solid #cfcfcf;
  font-family: 'DejaVu Sans Mono', monospace;
  font-size: 13.3px;
  line-height: 17px;
  color: #000;
  overflow: hidden;
}
.kw { color: #008000; font-weight: 700; }
.fn { color: #0000ff; }
.num { color: #008000; }
.op { color: #aa22ff; font-weight: 700; }

/* pyplasm window, floats over the desktop */
.window {
  position: absolute;
  left: 448px;
  top: 156px;
  width: 1024px;
  height: 796px;
  box-shadow: 0 10px 45px rgba(0,0,0,0.7);
  border-radius: 5px 5px 0 0;
  z-index: 3;
  display: flex;
  flex-direction: column;
}
.win-title {
  height: 28px;
  flex: none;
  display: flex;
  align-items: center;
  gap: 4px;
  padding-left: 8px;
  border-radius: 5px 5px 0 0;
  background: linear-gradient(#57544b, #3f3e39);
}
.win-btn {
  width: 15px;
  height: 15px;
  border-radius: 50%;
  background: linear-gradient(#8a8880, #5c5a53);
  border: 1px solid #3c3b37;
  display: flex;
  align-items: center;
  justify-content: center;
}
.win-close {
  background: linear-gradient(#f0774b, #d94f22);
}
.win-name {
  margin-left: 9px;
  font-weight: 700;
  font-size: 14.2px;
  color: #dfdbd2;
}
.win-view {
  flex: 1;
  background: #4c6580;
}
.model {
  display: block;
}
```
